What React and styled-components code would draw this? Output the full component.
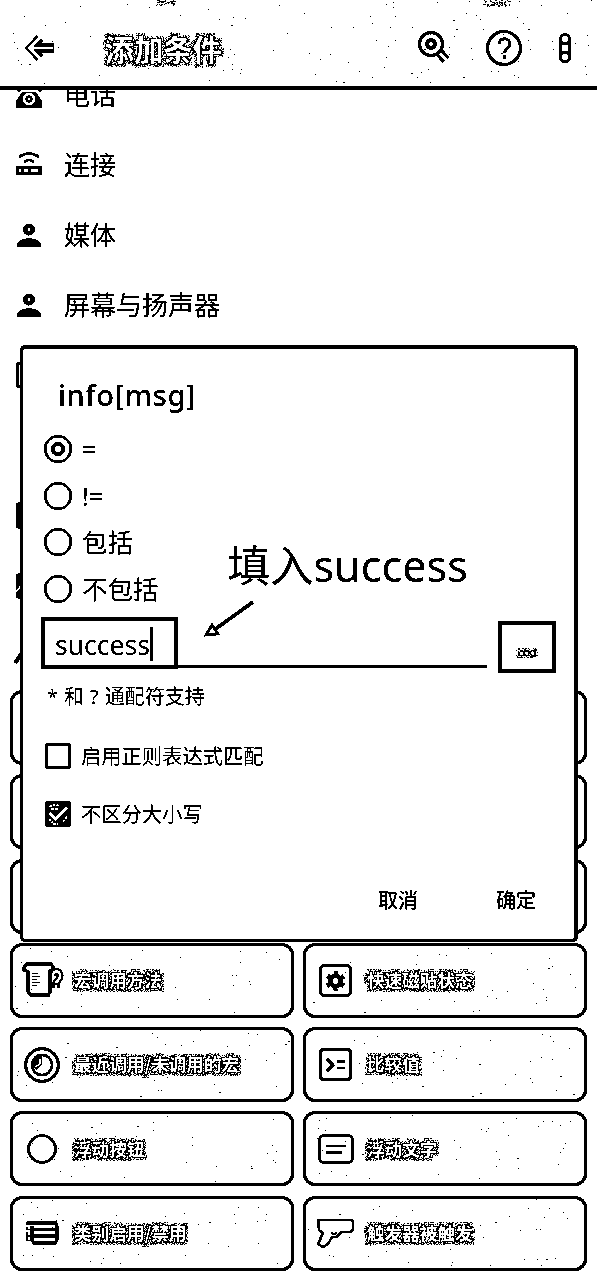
import React from "react";
import styled, { createGlobalStyle } from "styled-components";

const INK = "#000";
const PAPER = "#fff";

const GlobalStyle = createGlobalStyle`
  *, *::before, *::after { box-sizing: border-box; }
  body { margin: 0; background: ${PAPER}; }
`;

const Screen = styled.main`
  position: relative;
  width: 597px;
  height: 1280px;
  overflow: hidden;
  background: ${PAPER};
  color: ${INK};
  font-family: "Noto Sans", "Noto Sans CJK SC", sans-serif;
  filter: url(#two-tone);
`;

const Defs = styled.svg`
  position: absolute;
  width: 0;
  height: 0;
`;

const AppBar = styled.header`
  position: relative;
  z-index: 1;
  display: flex;
  align-items: center;
  height: 90px;
  padding: 10px 26px 0 25px;
  border-bottom: 4px solid ${INK};
  background: ${PAPER};
`;

const EtchedText = styled.span`
  color: ${PAPER};
  font-family: "Noto Sans CJK SC", sans-serif;
  font-weight: 700;
  font-size: ${(p) => p.$size}px;
  line-height: 1.4;
  white-space: nowrap;
  filter: url(#etched);
`;

const AppTitle = styled.h1`
  flex: 1;
  margin: 0 0 0 50px;
  line-height: 1;
`;

const BarActions = styled.div`
  display: flex;
  align-items: center;
  gap: 32px;
`;

const Icon = styled.svg`
  display: block;
  flex: none;
  overflow: visible;
  fill: none;
  stroke: ${INK};
  stroke-width: ${(p) => p.$stroke || 3};
`;

const MenuIcon = styled(Icon)`
  margin-left: 5px;
`;

const CategoryList = styled.ul`
  margin: -30px 0 0;
  padding: 0;
  list-style: none;
`;

const Category = styled.li`
  display: flex;
  align-items: center;
  gap: 21px;
  height: 70px;
  padding: 0 0 1px 16px;
  font-family: "Noto Sans CJK SC", sans-serif;
  font-size: 26px;
  line-height: 35px;
`;

const CategoryLabel = styled.span`
  padding-bottom: 2px;
`;

const ConditionGrid = styled.section`
  display: grid;
  grid-template-columns: 284px 284px;
  grid-auto-rows: 75px;
  gap: 9.3px 9px;
  padding-left: 10px;
`;

const ConditionCard = styled.div`
  position: relative;
  display: flex;
  align-items: center;
  gap: 12px;
  padding-left: 9px;
  border: 3.5px solid ${INK};
  border-radius: 12px;
`;

const CardIcon = styled.span`
  display: flex;
  justify-content: center;
  width: 40px;
`;

const Dust = styled.svg`
  position: absolute;
  inset: 0;
  width: 100%;
  height: 100%;
  overflow: visible;
  fill: ${INK};
  shape-rendering: crispEdges;
  pointer-events: none;
`;

const Dialog = styled.section`
  position: absolute;
  z-index: 2;
  left: 20px;
  top: 345px;
  width: 558px;
  height: 597px;
  padding: 0 18px;
  border: 3px solid ${INK};
  border-width: 4px 4px 3px 3px;
  border-radius: 5px;
  background: ${PAPER};
`;

const DialogTitle = styled.h2`
  margin: 26px 0 0 17px;
  font-weight: 500;
  font-size: 29px;
  line-height: 40px;
  letter-spacing: 0.6px;
`;

const RadioGroup = styled.div`
  display: flex;
  flex-direction: column;
  margin: 11px 0 0 3px;
`;

const RadioRow = styled.div`
  display: flex;
  align-items: center;
  gap: 10px;
  height: 46.5px;
  font-size: 25.5px;
  line-height: 34px;
`;

const InputRow = styled.div`
  display: flex;
  height: 57px;
  margin-top: 5px;
`;

const Field = styled.div`
  display: flex;
  align-items: center;
  width: 137px;
  height: 52px;
  padding: 4px 0 0 10px;
  border: 4px solid ${INK};
  font-size: 26.5px;
  line-height: 34px;
`;

const Caret = styled.i`
  width: 3px;
  height: 34px;
  margin-top: -3px;
  background: ${INK};
`;

const FieldLine = styled.div`
  width: 309px;
  height: 51px;
  border-bottom: 3px solid ${INK};
`;

const MoreButton = styled.div`
  display: flex;
  align-items: center;
  justify-content: center;
  width: 58px;
  height: 52px;
  margin: 4px 0 0 11px;
  padding-top: 2px;
  border: 4px solid ${INK};
`;

const Hint = styled.p`
  margin: 9px 0 0 6px;
  font-size: 20px;
  line-height: 28px;
  word-spacing: 0.8px;
`;

const CheckRow = styled.div`
  display: flex;
  align-items: center;
  gap: 10px;
  height: 58px;
  margin-left: 4px;
  font-size: 20.3px;
  line-height: 28px;
`;

const CheckGroup = styled.div`
  margin-top: 16px;
`;

const DialogActions = styled.div`
  display: flex;
  justify-content: flex-end;
  gap: 78px;
  margin-top: 44px;
  padding-right: 20px;
  font-weight: 500;
  font-size: 20px;
  line-height: 28px;
`;

const Note = styled.div`
  position: absolute;
  left: 204px;
  top: 186px;
  font-size: 43.2px;
  line-height: 62px;
  white-space: nowrap;
`;

const NoteArrow = styled(Icon)`
  position: absolute;
  left: 180px;
  top: 250px;
`;

function makeSpecks(seed, count, width, height) {
  let s = seed * 7919;
  const next = () => {
    s = (s + 0x6d2b79f5) | 0;
    let t = Math.imul(s ^ (s >>> 15), 1 | s);
    t = (t + Math.imul(t ^ (t >>> 7), 61 | t)) ^ t;
    return ((t ^ (t >>> 14)) >>> 0) / 4294967296;
  };
  return Array.from({ length: count }, () => [
    Math.round(next() * width),
    Math.round(next() * height),
    next() > 0.9 ? 2 : 1,
  ]);
}

function Specks({ seed, count, width, height, x = 0, y = 0 }) {
  return (
    <Dust aria-hidden="true">
      {makeSpecks(seed, count, width, height).map(([px, py, w], i) => (
        <rect key={i} x={px + x} y={py + y} width={w} height="1" />
      ))}
    </Dust>
  );
}

const PersonIcon = () => (
  <Icon width="27" height="26" viewBox="0 0 27 26">
    <circle cx="13" cy="7.500" r="3.8" strokeWidth="4.4" />
    <path d="M1 25v-3c2-4 7-5.500 12-5.500s10 1.500 12 5.500v3z" fill="#000" stroke="none" />
  </Icon>
);

const PhoneIcon = () => (
  <Icon width="27" height="26" viewBox="0 0 27 26">
    <path d="M0 26v-7l6-9h14l6 9v7z" fill="#000" stroke="none" />
    <path d="M-2 6q15-7 31 0l-5 4-5-4H8L3 10z" fill="#000" stroke="none" />
    <circle cx="13" cy="17" r="5" fill="#000" stroke="#fff" strokeWidth="2.800" />
    <circle cx="13" cy="17" r="1" fill="#fff" stroke="none" />
  </Icon>
);

const RouterIcon = () => (
  <Icon width="27" height="26" viewBox="0 0 27 26" $stroke="2.4">
    <path d="M3 5q10-7 20 0M8 10q5-4 10 0" />
    <path d="M0 14h26v9H0z" fill="#000" stroke="none" />
    <path d="M3 18.500h2M8 18.500h4M15 18.500h7" stroke="#fff" strokeWidth="2.400" />
  </Icon>
);

const SquareIcon = () => (
  <Icon width="27" height="26" viewBox="0 0 27 26"><rect x="1.500" y="1.500" width="24" height="23" rx="2" /></Icon>
);
const SolidIcon = () => (
  <Icon width="27" height="26" viewBox="0 0 27 26"><rect x="1.500" y="2" width="24" height="23" rx="1" fill="#000" /></Icon>
);
const SlashedIcon = () => (
  <Icon width="27" height="26" viewBox="0 0 27 26">
    <rect x="1.500" y="3" width="24" height="22" rx="1" fill="#000" />
    <path d="M0 20l7-9" stroke="#fff" strokeWidth="1.500" />
  </Icon>
);
const PenIcon = () => (
  <Icon width="27" height="26" viewBox="0 0 27 26" $stroke="4"><path d="M-1 21L9 7" /></Icon>
);

const categories = [
  ["电话", PhoneIcon],
  ["连接", RouterIcon],
  ["媒体", PersonIcon],
  ["屏幕与扬声器", PersonIcon],
  ["", SquareIcon],
  ["", null],
  ["", SolidIcon],
  ["", SlashedIcon],
  ["", PenIcon],
];

const MacroCallIcon = () => (
  <Icon width="38" height="36" viewBox="0 0 38 36">
    <path d="M1 5l3-3h24l2 3v4h-3v21l-2 3H8l-3-3V10L1 8z" />
    <path d="M9 11.500h6M9 14.500h8M9 17.500h5M9 20.500h8M9 23.500h5" strokeWidth="1.300" />
    <path d="M30 14c0-6 7-6 7 0 0 4-3 4-4 7v5" strokeWidth="7" />
    <path d="M30 14c0-6 7-6 7 0 0 4-3 4-4 7m0 2v3" stroke="#fff" strokeWidth="2.600" />
  </Icon>
);
const RecentIcon = () => (
  <Icon width="36" height="36" viewBox="0 0 36 36">
    <circle cx="18" cy="18" r="16.300" />
    <circle cx="18" cy="18" r="10" strokeWidth="2.600" />
    <path d="M18 8v9l-6 6q-7-9 6-15z" fill="#000" stroke="none" />
    <path d="M11 20l5-3v-5" stroke="#fff" strokeWidth="1.500" />
  </Icon>
);
const RoundIcon = () => (
  <Icon width="30" height="30" viewBox="0 0 30 30"><circle cx="15" cy="15" r="13.500" strokeWidth="2.700" /></Icon>
);
const StripesIcon = () => (
  <Icon width="32" height="22" viewBox="0 0 32 22">
    <path d="M1 1h29l1 3v14l-2 3H8l-2-3V4M7 7.500h24M7 14h24" strokeWidth="2.900" />
    <path d="M0 7.500h5M0 14h5M0 18.500h5" strokeWidth="1.500" />
    <path d="M1 0v20" strokeDasharray="3 2" strokeWidth="1.500" />
  </Icon>
);
const TileIcon = () => (
  <Icon width="33" height="33" viewBox="0 0 33 33">
    <rect x="1.500" y="1.500" width="30" height="30" rx="4" />
    <circle cx="16.500" cy="17" r="5.200" strokeWidth="4.200" />
    <circle cx="16.500" cy="17" r="8.200" strokeWidth="3" strokeDasharray="4.300 4.290" strokeDashoffset="2.150" transform="rotate(-90 16.500 17)" />
  </Icon>
);
const CompareIcon = () => (
  <Icon width="33" height="33" viewBox="0 0 33 33">
    <rect x="1.500" y="1.500" width="30" height="30" rx="3" />
    <path d="M8 11l6 6-6 6" strokeWidth="2.700" />
    <path d="M18 13.500h8M18 20h8" strokeWidth="2.700" strokeDasharray="3.600 .8" />
  </Icon>
);
const TextBoxIcon = () => (
  <Icon width="35" height="30" viewBox="0 0 35 30">
    <rect x="1.500" y="1.500" width="33" height="27" rx="4.500" strokeWidth="2.700" />
    <path d="M8 12h20M8 18.500h16" strokeWidth="2.600" />
  </Icon>
);
const GunIcon = () => (
  <Icon width="37" height="29" viewBox="0 0 37 29" $stroke="2.5" strokeLinejoin="round">
    <path d="M1 1h34l1 2v7l-2 3H24l-4 5h-5l-4 7-5 3-5-3 5-11-4-3z" />
    <path d="M14 13.500q3 3 6 0" strokeWidth="2" />
  </Icon>
);

const cards = [
  null, null, null, null, null, null,
  ["宏调用方法", MacroCallIcon],
  ["快速磁贴状态", TileIcon],
  ["最近调用/未调用的宏", RecentIcon],
  ["比较值", CompareIcon],
  ["浮动按钮", RoundIcon],
  ["浮动文字", TextBoxIcon],
  ["类别启用/禁用", StripesIcon],
  ["触发器被触发", GunIcon],
];

const Radio = ({ checked }) => (
  <Icon width="28" height="28" viewBox="0 0 28 28" $stroke="2.6">
    <circle cx="14" cy="14" r="12.800" />
    {checked && <circle cx="14" cy="14" r="5.200" strokeWidth="3.800" />}
  </Icon>
);

const Check = ({ checked }) => (
  <Icon width="26" height="26" viewBox="0 0 26 26" $stroke="2.6">
    <rect x="1.300" y="1.300" width="23.400" height="23.400" rx="1" fill={checked ? "#000" : "none"} />
    {checked && (
      <>
        <path d="M4.500 12l6 6L22 6.500" stroke="#fff" strokeWidth="3" />
        <path d="M4 6q5-4 10-1M6 8h7M18 21l5-7M4 18l4 4M8 23h5" stroke="#fff" strokeWidth="2" strokeDasharray="3 1" />
      </>
    )}
  </Icon>
);

export default function App() {
  return (
    <>
      <GlobalStyle />
      <Defs aria-hidden="true">
        <filter id="two-tone" x="0" y="0" width="100%" height="100%" colorInterpolationFilters="sRGB">
          <feComponentTransfer>
            <feFuncR type="discrete" tableValues="0 0 0 1 1" />
            <feFuncG type="discrete" tableValues="0 0 0 1 1" />
            <feFuncB type="discrete" tableValues="0 0 0 1 1" />
          </feComponentTransfer>
        </filter>
        <filter id="etched" x="-10%" y="-20%" width="120%" height="140%" colorInterpolationFilters="sRGB">
          <feMorphology in="SourceAlpha" operator="dilate" radius="1" result="near" />
          <feMorphology in="SourceAlpha" operator="dilate" radius="3" result="far" />
          <feTurbulence type="fractalNoise" baseFrequency="0.8" numOctaves="2" seed="4" />
          <feColorMatrix values="0 0 0 0 0  0 0 0 0 0  0 0 0 0 0  20 0 0 0 -9.6" result="grain" />
          <feComposite in="far" in2="grain" operator="in" result="edge" />
          <feTurbulence type="fractalNoise" baseFrequency="0.7" numOctaves="2" seed="9" />
          <feColorMatrix values="0 0 0 0 0  0 0 0 0 0  0 0 0 0 0  20 0 0 0 -6.5" result="dense" />
          <feComposite in="near" in2="dense" operator="in" result="core" />
          <feMerge>
            <feMergeNode in="edge" />
            <feMergeNode in="core" />
            <feMergeNode in="SourceGraphic" />
          </feMerge>
        </filter>
      </Defs>
      <Screen>
        <AppBar>
          <Icon width="30" height="28" viewBox="0 0 30 28">
            <path d="M15 4L6 14l9 10M6 14h23" strokeWidth="9" />
            <path d="M16 2L5 14l11 12M5 14h23" stroke="#fff" strokeWidth="3.200" />
          </Icon>
          <AppTitle><EtchedText $size={29.2}>添加条件</EtchedText></AppTitle>
          <BarActions>
            <Icon width="38" height="36" viewBox="0 0 38 36">
              <path d="M22 21l8 9" strokeWidth="9" />
              <path d="M23 22l7 8" stroke="#fff" strokeWidth="3" />
              <circle cx="15" cy="14" r="11.500" fill="#fff" />
              <circle cx="15" cy="14" r="4" strokeWidth="4" />
            </Icon>
            <Icon width="36" height="36" viewBox="0 0 36 36">
              <circle cx="18" cy="18" r="16.500" />
              <path d="M13 14c0-7 11-7 11 0 0 4-5 4-5.500 9M18.500 25.500v3" strokeWidth="2.800" />
            </Icon>
            <MenuIcon width="12" height="30" viewBox="0 0 12 30" $stroke="2.6">
              <rect x="1.500" y="1.500" width="9" height="9" rx="4" />
              <rect x="1.500" y="10.500" width="9" height="9" rx="3.500" />
              <rect x="1.500" y="19.500" width="9" height="9" rx="4" />
              <path d="M1.500 7v16M10.500 7v16" />
            </MenuIcon>
          </BarActions>
          <Specks seed={3} count={120} width={596} height={84} />
          <Specks seed={6} count={50} width={18} height={5} x={156} />
          <Specks seed={8} count={90} width={28} height={6} x={482} />
        </AppBar>

        <CategoryList>
          {categories.map(([label, Glyph], i) => (
            <Category key={i}>
              {Glyph && <Glyph />}
              <CategoryLabel>{label}</CategoryLabel>
            </Category>
          ))}
        </CategoryList>

        <ConditionGrid>
          {cards.map((card, i) => {
            if (!card) return <ConditionCard key={i} />;
            const [label, Glyph] = card;
            return (
              <ConditionCard key={i}>
                <CardIcon><Glyph /></CardIcon>
                <EtchedText $size={17.6}>{label}</EtchedText>
                <Specks seed={i + 11} count={42} width={276} height={67} />
              </ConditionCard>
            );
          })}
        </ConditionGrid>

        <Dialog>
          <DialogTitle>info[msg]</DialogTitle>
          <RadioGroup>
            {["=", "!=", "包括", "不包括"].map((label, i) => (
              <RadioRow key={label}>
                <Radio checked={i === 0} />
                {label}
              </RadioRow>
            ))}
          </RadioGroup>
          <InputRow>
            <Field>success<Caret /></Field>
            <FieldLine />
            <MoreButton><EtchedText $size={18}>...</EtchedText></MoreButton>
          </InputRow>
          <Hint>* 和 ? 通配符支持</Hint>
          <CheckGroup>
            <CheckRow><Check />启用正则表达式匹配</CheckRow>
            <CheckRow><Check checked />不区分大小写</CheckRow>
          </CheckGroup>
          <DialogActions>
            <span>取消</span>
            <span>确定</span>
          </DialogActions>
          <Note>填入success</Note>
          <NoteArrow width="54" height="42" viewBox="0 0 54 42" $stroke="3.5">
            <path d="M50 3L11 31" />
            <path d="M3 36l6-10 6 9z" strokeWidth="2.600" fill="#fff" />
          </NoteArrow>
        </Dialog>
      </Screen>
    </>
  );
}
